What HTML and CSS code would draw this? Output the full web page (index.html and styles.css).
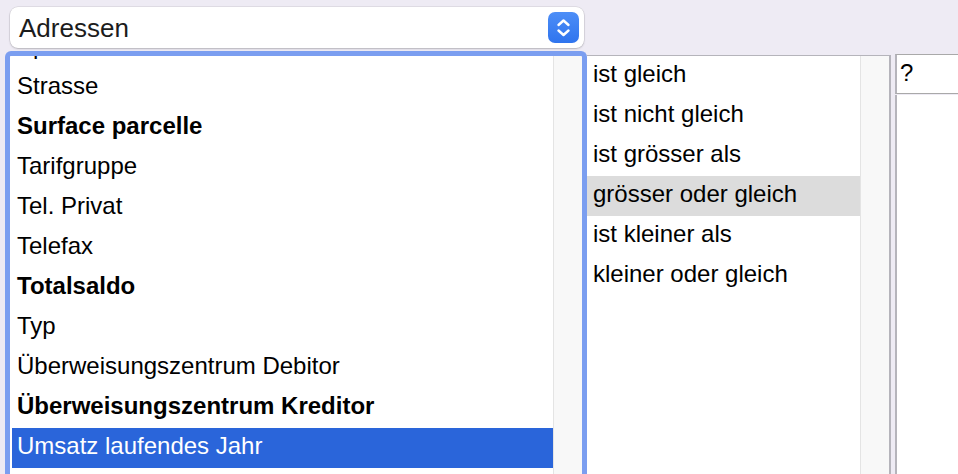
FILE: index.html
```html
<!DOCTYPE html>
<html lang="de">
<head>
<meta charset="utf-8">
<title>Filter</title>
<link rel="stylesheet" href="styles.css">
</head>
<body>
<div class="page">
  <div class="select">
    <span class="select-label">Adressen</span>
    <span class="stepper">
      <svg width="31" height="31" viewBox="0 0 31 31">
        <path d="M10.5 13 L15.5 8.5 L20.5 13" fill="none" stroke="#fff" stroke-width="2.4" stroke-linecap="round" stroke-linejoin="round"/>
        <path d="M10.5 18.5 L15.5 23 L20.5 18.5" fill="none" stroke="#fff" stroke-width="2.4" stroke-linecap="round" stroke-linejoin="round"/>
      </svg>
    </span>
  </div>
  <div class="panels">
    <div class="list list-fields">
      <ul class="items">
        <li>Sprache</li>
        <li>Strasse</li>
        <li class="bold">Surface parcelle</li>
        <li>Tarifgruppe</li>
        <li>Tel. Privat</li>
        <li>Telefax</li>
        <li class="bold">Totalsaldo</li>
        <li>Typ</li>
        <li>Überweisungszentrum Debitor</li>
        <li class="bold">Überweisungszentrum Kreditor</li>
        <li class="selected">Umsatz laufendes Jahr</li>
      </ul>
      <div class="track"></div>
    </div>
    <div class="list list-ops">
      <ul class="items">
        <li>ist gleich</li>
        <li>ist nicht gleich</li>
        <li>ist grösser als</li>
        <li class="current">grösser oder gleich</li>
        <li>ist kleiner als</li>
        <li>kleiner oder gleich</li>
      </ul>
      <div class="track"></div>
    </div>
    <div class="value-col">
      <div class="value-input">?</div>
      <div class="value-area"></div>
    </div>
  </div>
</div>
</body>
</html>
```
FILE: styles.css
```css
html, body {
  margin: 0;
  padding: 0;
}
body {
  background: #eeebf4;
  font-family: "Liberation Sans", Arial, sans-serif;
  color: #000;
  overflow: hidden;
  height: 474px;
}
.page {
  padding-top: 7px;
}
.select {
  margin-left: 10px;
  width: 574px;
  height: 41px;
  background: #fff;
  border-radius: 8px;
  box-shadow: 0 0 0 0.5px rgba(0,0,0,0.12), 0 1px 2px rgba(0,0,0,0.18);
  display: flex;
  align-items: center;
  justify-content: space-between;
  box-sizing: border-box;
  padding: 0 5px 0 9px;
}
.select-label {
  font-size: 26px;
  color: #1c1c1c;
  line-height: 1;
  padding-top: 1px;
}
.stepper {
  width: 31px;
  height: 31px;
  border-radius: 7px;
  background: linear-gradient(#4d8ef7, #2f74ee);
  display: flex;
}
.panels {
  display: flex;
  align-items: flex-start;
  margin-top: 3px;
}
.list {
  display: flex;
  background: #fff;
  overflow: hidden;
}
.items {
  list-style: none;
  margin: 0;
  padding: 0;
  flex: 1;
  font-size: 24px;
}
.items li {
  height: 40px;
  line-height: 36px;
  padding: 0 0 4px 5px;
  box-sizing: border-box;
  white-space: nowrap;
}
.items li.bold {
  font-weight: bold;
}
.track {
  width: 28px;
  background: #f8f8f8;
  border-left: 1px solid #e4e4e4;
}
.list-fields {
  margin-left: 5px;
  width: 572px;
  height: 440px;
  border: 5px solid #7b9ef0;
  border-bottom: none;
  border-radius: 6px 6px 0 0;
  box-shadow: inset -1px 0 0 #6c86d6;
}
.list-fields .items {
  margin-top: -28px;
  padding-left: 2px;
}
.list-fields .items li.selected {
  background: #2a65da;
  color: #fff;
}
.list-ops {
  margin-top: 4px;
  width: 302px;
  height: 430px;
  border-top: 1px solid #b5b4bb;
  border-right: 2px solid #b5b4bb;
}
.list-ops .items li {
  padding-left: 6px;
}
.list-ops .items li.current {
  background: #dcdcdc;
}
.value-col {
  margin-left: 4px;
  margin-top: 3px;
  flex: 1;
  display: flex;
  flex-direction: column;
  height: 430px;
}
.value-input {
  height: 40px;
  box-sizing: border-box;
  border: 1px solid #a9a9a9;
  border-right: none;
  border-left: 2px solid #b5b4bb;
  background: #fff;
  font-size: 24px;
  line-height: 35px;
  padding-left: 3px;
}
.value-area {
  flex: 1;
  margin-top: 1px;
  background: #fff;
  border-left: 2px solid #b5b4bb;
}
```
